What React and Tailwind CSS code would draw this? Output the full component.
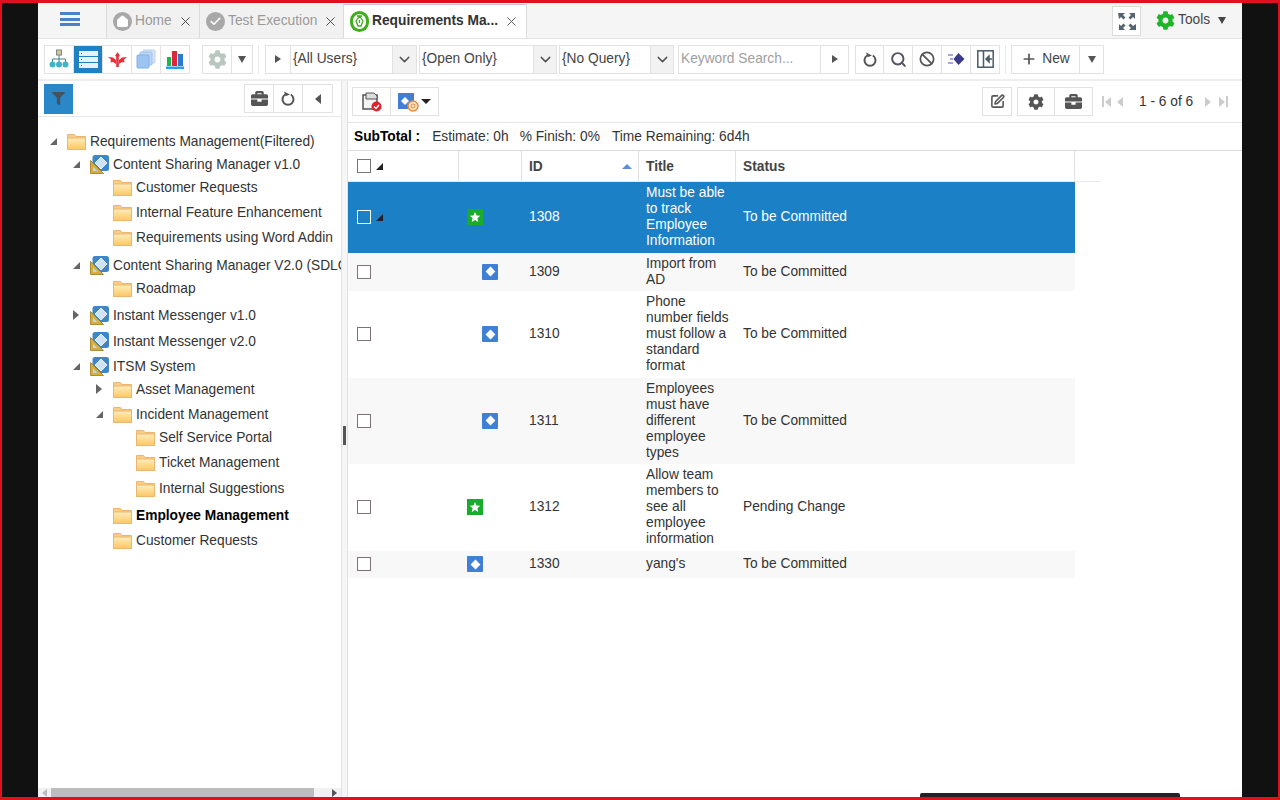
import { Check, ChevronDown, Search, Ban, Plus, SquarePen, Home, X } from 'lucide-react'
import { FaBriefcase, FaCog, FaFilter } from 'react-icons/fa'

const treeRows = [
  { label: 'Requirements Management(Filtered)', indent: 'pl-[8px]', gap: 'mt-0', arrow: 'open', icon: 'folder' },
  { label: 'Content Sharing Manager v1.0', indent: 'pl-[31px]', gap: 'mt-px', arrow: 'open', icon: 'project' },
  { label: 'Customer Requests', indent: 'pl-[54px]', gap: 'mt-px', icon: 'folder' },
  { label: 'Internal Feature Enhancement', indent: 'pl-[54px]', gap: 'mt-[3px]', icon: 'folder' },
  { label: 'Requirements using Word Addin', indent: 'pl-[54px]', gap: 'mt-[3px]', icon: 'folder' },
  { label: 'Content Sharing Manager V2.0 (SDLC)', indent: 'pl-[31px]', gap: 'mt-[6px]', arrow: 'open', icon: 'project' },
  { label: 'Roadmap', indent: 'pl-[54px]', gap: 'mt-px', icon: 'folder' },
  { label: 'Instant Messenger v1.0', indent: 'pl-[31px]', gap: 'mt-[5px]', arrow: 'closed', icon: 'project' },
  { label: 'Instant Messenger v2.0', indent: 'pl-[31px]', gap: 'mt-[4px]', icon: 'project' },
  { label: 'ITSM System', indent: 'pl-[31px]', gap: 'mt-[3px]', arrow: 'open', icon: 'project' },
  { label: 'Asset Management', indent: 'pl-[54px]', gap: 'mt-px', arrow: 'closed', icon: 'folder' },
  { label: 'Incident Management', indent: 'pl-[54px]', gap: 'mt-[3px]', arrow: 'open', icon: 'folder' },
  { label: 'Self Service Portal', indent: 'pl-[77px]', gap: 'mt-px', icon: 'folder' },
  { label: 'Ticket Management', indent: 'pl-[77px]', gap: 'mt-[3px]', icon: 'folder' },
  { label: 'Internal Suggestions', indent: 'pl-[77px]', gap: 'mt-[4px]', icon: 'folder' },
  { label: 'Employee Management', indent: 'pl-[54px]', gap: 'mt-[5px]', icon: 'folder', bold: true },
  { label: 'Customer Requests', indent: 'pl-[54px]', gap: 'mt-[3px]', icon: 'folder' },
]

const gridRows = [
  { id: 1308, title: 'Must be able to track Employee Information', status: 'To be Committed', type: 'star', height: 'h-[71px]', selected: true, arrow: true },
  { id: 1309, title: 'Import from AD', status: 'To be Committed', type: 'req', height: 'h-[38px]', shaded: true, indented: true },
  { id: 1310, title: 'Phone number fields must follow a standard format', status: 'To be Committed', type: 'req', height: 'h-[87px]', indented: true },
  { id: 1311, title: 'Employees must have different employee types', status: 'To be Committed', type: 'req', height: 'h-[86px]', shaded: true, indented: true },
  { id: 1312, title: 'Allow team members to see all employee information', status: 'Pending Change', type: 'star', height: 'h-[87px]' },
  { id: 1330, title: "yang's", status: 'To be Committed', type: 'req', height: 'h-[27px]', shaded: true },
]

function FolderIcon() {
  return (
    <svg width="19" height="17" viewBox="0 0 19 17" className="shrink-0">
      <defs>
        <linearGradient id="folderFill" x1="0" y1="0" x2="0" y2="1">
          <stop offset="0" stopColor="#ffedc0" />
          <stop offset="0.35" stopColor="#fde09a" />
          <stop offset="1" stopColor="#fbc766" />
        </linearGradient>
      </defs>
      <path d="M.5 4V1.500h7l1.500 2h9.500V6H.5z" fill="#f8cd85" stroke="#ecb670" />
      <rect x=".5" y="5" width="18" height="11.500" fill="url(#folderFill)" stroke="#ecb670" />
    </svg>
  )
}

function ProjectIcon() {
  return (
    <svg width="19" height="19" viewBox="0 0 19 19" className="shrink-0">
      <rect x="2.500" y="0" width="16.500" height="16" rx="2.500" fill="#3f86c8" />
      <path d="M11 2l6 6-6 6-6-6z" fill="#cfe3f5" stroke="#fff" strokeWidth=".8" />
      <path d="M.5 5.500v13h13z" fill="#d6ae3c" stroke="#9a7a20" strokeWidth=".8" />
      <path d="M3 11.500V16h4.500z" fill="#bcd6ee" />
    </svg>
  )
}

function TreeArrow({ kind }) {
  return (
    <span className="flex h-full w-[14px] shrink-0 items-center justify-center">
      {kind === 'open' && <span className="h-0 w-0 border-b-[7px] border-l-[7px] border-b-[#666] border-l-transparent" />}
      {kind === 'closed' && <span className="h-0 w-0 border-y-[5px] border-l-[6px] border-y-transparent border-l-[#666]" />}
    </span>
  )
}

function Tri({ dir = 'down', color = 'border-t-[#555]' }) {
  if (dir === 'right') return <span className="block h-0 w-0 border-y-[4px] border-l-[6px] border-y-transparent border-l-[#555]" />
  if (dir === 'left') return <span className="block h-0 w-0 border-y-[5px] border-r-[6px] border-y-transparent border-r-[#555]" />
  return <span className={`block h-0 w-0 border-x-[4px] border-t-[7px] border-x-transparent ${color}`} />
}

function ToolGroup({ children, className = '' }) {
  return <div className={`flex h-[29px] shrink-0 divide-x divide-[#e2e2e2] border border-[#e2e2e2] bg-white ${className}`}>{children}</div>
}

function Tool({ children, className = 'w-[29px]' }) {
  return <div className={`flex h-full shrink-0 items-center justify-center ${className}`}>{children}</div>
}

function Refresh() {
  return (
    <svg width="14" height="15" viewBox="0 0 14 15" fill="none">
      <path d="M4.200 3.500a5.500 5.500 0 1 0 5.600 0" stroke="#555" strokeWidth="2" />
      <path d="M3 .5l1.500 4.800L9 3.600z" fill="#555" />
    </svg>
  )
}

function Picker({ label, width, inner }) {
  return (
    <div className={`flex h-[29px] shrink-0 border border-[#e2e2e2] bg-white ${width}`}>
      <div className={`flex items-center pl-[2px] pt-[1px] text-[#444] ${inner}`}>{label}</div>
      <div className="flex flex-1 items-center justify-center border-l border-[#e2e2e2] bg-[#f2f2f2]">
        <ChevronDown size={17} strokeWidth={2} className="text-[#555]" />
      </div>
    </div>
  )
}

function Tab({ icon, label, width, active }) {
  return (
    <div className={`flex h-[34px] shrink-0 items-center border-r border-[#dcdcdc] ${width} ${active ? 'border-t border-t-[#bcc4d8] bg-white font-bold text-[#333]' : 'bg-[#f1f1f1] text-[#9a9a9a]'}`}>
      <div className="ml-[6px] mr-[3px] shrink-0">{icon}</div>
      <span className="whitespace-nowrap">{label}</span>
      <X size={15} strokeWidth={1.5} className={`ml-[6px] shrink-0 ${active ? 'text-[#555]' : 'text-[#444]'}`} />
    </div>
  )
}

function ReqIcon() {
  return (
    <span className="flex h-[16px] w-[16px] items-center justify-center rounded-[1px] bg-[#3f80d6]">
      <span className="h-[7px] w-[7px] rotate-45 bg-white" />
    </span>
  )
}

function StarIcon() {
  return (
    <span className="flex h-[16px] w-[16px] items-center justify-center bg-[#19ac2a]">
      <svg width="12" height="12" viewBox="0 0 24 24" fill="#fff">
        <path d="M12 2l3 7 7.500.6-5.700 4.900 1.800 7.400L12 18l-6.600 3.900 1.800-7.400L1.500 9.600 9 9z" />
      </svg>
    </span>
  )
}

function GridRow({ row }) {
  const bg = row.selected ? 'bg-[#1b80c6] text-white' : row.shaded ? 'bg-[#f8f8f8] text-[#333]' : 'bg-white text-[#333]'
  return (
    <div className={`flex items-center pb-[1px] leading-[16px] ${row.height} ${bg}`}>
      <div className="flex w-[110px] shrink-0 items-center pl-[9px]">
        <span className={`h-[14px] w-[14px] border ${row.selected ? 'border-white bg-[#1b80c6]' : 'border-[#7d7373] bg-white'}`} />
        {row.arrow && <span className="ml-[5px] h-0 w-0 border-b-[7px] border-l-[7px] border-b-[#222] border-l-transparent" />}
      </div>
      <div className={`flex w-[63px] shrink-0 ${row.indented ? 'pl-[24px]' : 'pl-[9px]'}`}>
        {row.type === 'star' ? <StarIcon /> : <ReqIcon />}
      </div>
      <div className="w-[117px] shrink-0 pl-[8px]">{row.id}</div>
      <div className="w-[97px] shrink-0 pl-[8px] pr-[4px]">{row.title}</div>
      <div className="pl-[8px]">{row.status}</div>
    </div>
  )
}

export default function App() {
  return (
    <div className="relative flex h-[800px] w-[1280px] flex-col overflow-hidden border-x-2 border-y-[3px] border-[#e0101f] bg-[#111] px-[36px] font-['Liberation_Sans',Arial,sans-serif] text-[13.75px]">
      <div className="flex min-h-0 flex-1 flex-col bg-white">
        {/* tab strip */}
        <div className="flex h-[36px] shrink-0 items-end border-b border-[#e4e4e4] bg-[#f5f5f5]">
          <div className="flex h-[34px] w-[69px] shrink-0 items-center justify-center border-r border-[#dcdcdc]">
            <div className="flex flex-col gap-[2.5px] pb-[4px] pr-[5px]">
              <span className="h-[3px] w-[20px] bg-[#4a80cc]" />
              <span className="h-[3px] w-[20px] bg-[#4a80cc]" />
              <span className="h-[3px] w-[20px] bg-[#4a80cc]" />
            </div>
          </div>
          <Tab
            width="w-[93px]"
            label="Home"
            icon={<span className="flex h-[19px] w-[19px] items-center justify-center rounded-full bg-[#a8a8a8]"><Home size={13} fill="#fff" className="text-white" /></span>}
          />
          <Tab
            width="w-[144px]"
            label="Test Execution"
            icon={<span className="flex h-[19px] w-[19px] items-center justify-center rounded-full bg-[#a8a8a8]"><Check size={13} strokeWidth={3} className="text-white" /></span>}
          />
          <Tab
            active
            width="w-[183px]"
            label="Requirements Ma..."
            icon={
              <span className="flex h-[21px] w-[19px] items-center justify-center rounded-full bg-[#3fae1e]">
                <span className="flex h-[15px] w-[13px] items-center justify-center rounded-full bg-white">
                  <svg width="9" height="13" viewBox="0 0 9 13" fill="none" stroke="#3fae1e" strokeWidth="1.300">
                    <path d="M2 1h5M4.500 1L8 6l-2 5H3L1 6zM4.500 5v3" />
                  </svg>
                </span>
              </span>
            }
          />
          <div className="flex-1" />
          <div className="mb-[2px] flex h-[30px] w-[29px] shrink-0 items-center justify-center border border-[#dcdcdc] bg-white">
            <svg width="18" height="17" viewBox="0 0 18 17" fill="#56646f">
              <path d="M0 0h7L5 2l2.500 2.500-2 2L3 4 1 6zM18 0h-7l2 2-2.500 2.500 2 2L15 4l2 2V0zM0 17h7l-2-2 2.500-2.500-2-2L3 13l-2-2v6zM18 17h-7l2-2-2.500-2.500 2-2L15 13l3-2z" />
            </svg>
          </div>
          <div className="mb-[3px] ml-[15px] mr-[14px] flex h-[30px] w-[72px] shrink-0 items-center">
            <FaCog size={19} className="text-[#1fb52a]" />
            <span className="ml-[3px] text-[#444]">Tools</span>
            <span className="ml-[8px]"><Tri color="border-t-[#444]" /></span>
          </div>
        </div>

        {/* main toolbar */}
        <div className="flex h-[42px] shrink-0 items-center border-b-2 border-[#eeeeee] pl-[6px]">
          <ToolGroup>
            <Tool>
              <svg width="20" height="20" viewBox="0 0 20 20" fill="none">
                <rect x="7.500" y="1" width="5" height="5" fill="#d8c49a" stroke="#7a8a80" />
                <path d="M10 6v4M3.500 13v-3h13v3M10 10v3" stroke="#4a7f8c" />
                <circle cx="3.500" cy="15.500" r="3" fill="#3fb5c8" />
                <circle cx="10" cy="15.500" r="3" fill="#3fb5c8" />
                <circle cx="16.500" cy="15.500" r="3" fill="#3fb5c8" />
              </svg>
            </Tool>
            <Tool className="w-[29px] bg-[#1f80c4]">
              <svg width="19" height="19" viewBox="0 0 19 19">
                <rect y="1" width="19" height="5" fill="#e8f1f8" />
                <rect y="7" width="19" height="5" fill="#e8f1f8" />
                <rect y="13" width="19" height="5" fill="#e8f1f8" />
                <path d="M2 3.500h1M2 9.500h1M2 15.500h1" stroke="#1f80c4" />
              </svg>
            </Tool>
            <Tool>
              <svg width="19" height="17" viewBox="0 0 19 17">
                <path d="M9.500 1l2.500 4-1.200.5V16H8.200V5.500L7 5zM0 6l5 .5 3 2.500v4L5 11l-2.500.5L3 8.500zM19 6l-5 .5L11 9v4l3-2 2.500.5L16 8.500z" fill="#e8303a" />
              </svg>
            </Tool>
            <Tool>
              <svg width="20" height="20" viewBox="0 0 20 20">
                <rect x="7" y="1" width="12" height="13" rx="1" fill="#d6e6f8" stroke="#b4d0ee" />
                <rect x="4" y="3" width="12" height="13" rx="1" fill="#bcd6f4" stroke="#9cc0ea" />
                <rect x="1" y="6" width="12" height="13" rx="1" fill="#9cc4f0" stroke="#84b0e4" />
              </svg>
            </Tool>
            <Tool className="w-[28px]">
              <svg width="18" height="19" viewBox="0 0 18 19">
                <rect x="1" y="7" width="4" height="9" fill="#19b84a" />
                <rect x="6" y="1" width="5" height="15" fill="#e0263c" />
                <rect x="12" y="4" width="5" height="12" fill="#2a7ad0" />
                <rect y="16.500" width="18" height="2.500" fill="#2a9ee6" />
              </svg>
            </Tool>
          </ToolGroup>
          <ToolGroup className="ml-[12px]">
            <Tool><FaCog size={19} className="text-[#b8c8c0]" /></Tool>
            <Tool className="w-[20px]"><Tri /></Tool>
          </ToolGroup>
          <div className="ml-[5px] h-[29px] w-px bg-[#e8e8e8]" />
          <div className="ml-[6px] flex h-[29px] w-[25px] shrink-0 items-center justify-center border border-r-0 border-[#e2e2e2]"><Tri dir="right" /></div>
          <Picker label="{All Users}" width="w-[127px]" inner="w-[101px]" />
          <div className="w-[2px] shrink-0" />
          <Picker label="{Open Only}" width="w-[138px]" inner="w-[113px]" />
          <div className="w-[2px] shrink-0" />
          <Picker label="{No Query}" width="w-[115px]" inner="w-[90px]" />
          <div className="ml-[4px] flex h-[29px] w-[171px] shrink-0 border border-[#e2e2e2]">
            <div className="flex w-[141px] items-center pl-[2px] text-[#a0a0a0]">Keyword Search...</div>
            <div className="flex flex-1 items-center justify-center border-l border-[#e2e2e2]"><Tri dir="right" /></div>
          </div>
          <ToolGroup className="ml-[6px]">
            <Tool className="w-[28px]"><Refresh /></Tool>
            <Tool><Search size={17} strokeWidth={2.8} className="text-[#556]" /></Tool>
            <Tool><Ban size={16} strokeWidth={2.6} className="text-[#555]" /></Tool>
            <Tool>
              <svg width="17" height="12" viewBox="0 0 17 12">
                <path d="M10.500 0l6 6-6 6-5-6z" fill="#3a3a8c" />
                <path d="M0 2h5M2 6h3M0 10h5" stroke="#8a8ac8" strokeWidth="1.500" />
              </svg>
            </Tool>
            <Tool className="w-[28px]">
              <svg width="17" height="18" viewBox="0 0 17 18" fill="none" stroke="#4a5a68" strokeWidth="1.500">
                <rect x=".8" y=".8" width="15.400" height="16.400" />
                <path d="M6.500 1v16M15 9H9.500" />
                <path d="M9 9l3-3v6z" fill="#4a5a68" />
              </svg>
            </Tool>
          </ToolGroup>
          <div className="ml-[5px] h-[29px] w-px bg-[#e8e8e8]" />
          <ToolGroup className="ml-[5px]">
            <Tool className="w-[68px]">
              <Plus size={16} strokeWidth={2.6} className="text-[#555]" />
              <span className="ml-[5px] pt-[1px] text-[#444]">New</span>
            </Tool>
            <Tool className="w-[23px]"><Tri /></Tool>
          </ToolGroup>
        </div>

        {/* body */}
        <div className="flex min-h-0 flex-1">
          {/* tree panel */}
          <div className="flex w-[303px] shrink-0 flex-col overflow-hidden">
            <div className="flex h-[36px] shrink-0 items-center border-b border-[#e8e8e8] pl-[6px] pr-[8px]">
              <div className="flex h-[30px] w-[29px] items-center justify-center bg-[#2b88c8]">
                <FaFilter size={13} className="text-[#44525e]" />
              </div>
              <div className="flex-1" />
              <ToolGroup>
                <Tool><FaBriefcase size={17} className="text-[#555]" /></Tool>
                <Tool><Refresh /></Tool>
                <Tool><Tri dir="left" /></Tool>
              </ToolGroup>
            </div>
            <div className="min-h-0 flex-1 pt-[13px]">
              {treeRows.map((item, i) => (
                <div key={i} className={`flex h-[22px] w-[303px] items-center overflow-hidden whitespace-nowrap text-[#333] ${item.indent} ${item.gap} ${item.bold ? 'font-bold text-black' : ''}`}>
                  <TreeArrow kind={item.arrow} />
                  <span className="ml-[7px] mr-[4px] flex w-[19px] shrink-0 justify-center">
                    {item.icon === 'folder' ? <FolderIcon /> : <ProjectIcon />}
                  </span>
                  <span className="pt-[2px]">{item.label}</span>
                </div>
              ))}
            </div>
            <div className="flex h-[9px] shrink-0 items-center bg-[#f1f1f1]">
              <span className="ml-[4px] h-0 w-0 border-y-[4px] border-r-[5px] border-y-transparent border-r-[#bbb]" />
              <div className="ml-[4px] h-[9px] w-[263px] bg-[#bdbdbd]" />
              <div className="flex-1" />
              <span className="mr-[4px] h-0 w-0 border-y-[4px] border-l-[5px] border-y-transparent border-l-[#555]" />
            </div>
          </div>

          {/* splitter */}
          <div className="flex w-[7px] shrink-0 items-center border-x border-[#e2e2e2] bg-[#f6f6f6]">
            <div className="mb-[8px] ml-[1px] h-[19px] w-[3px] bg-[#555]" />
          </div>

          {/* grid panel */}
          <div className="flex min-w-0 flex-1 flex-col">
            <div className="flex h-[42px] shrink-0 items-center border-b border-[#e4e4e4] pl-[4px] pr-[6px]">
              <ToolGroup>
                <Tool className="w-[38px]">
                  <svg width="20" height="20" viewBox="0 0 20 20">
                    <rect x="1" y="3" width="14" height="14" fill="#f4f4f4" stroke="#555" strokeWidth="1.500" />
                    <path d="M4 1h8l3 3v3H4z" fill="#ddd" stroke="#555" />
                    <circle cx="14.500" cy="14.500" r="5" fill="#e0202c" />
                    <path d="M12 14.500l2 2 3-3.500" fill="none" stroke="#fff" strokeWidth="1.500" />
                  </svg>
                </Tool>
                <Tool className="w-[47px]">
                  <svg width="22" height="20" viewBox="0 0 22 20">
                    <rect x="0" y="1" width="16" height="16" fill="#3f80d6" />
                    <path d="M7 5l4 4-4 4-4-4z" fill="#fff" />
                    <circle cx="15" cy="14" r="5" fill="#f6e2c8" stroke="#e8893a" strokeWidth="1.500" />
                    <circle cx="15" cy="14" r="2" fill="none" stroke="#e8893a" />
                  </svg>
                  <span className="ml-[1px] h-0 w-0 border-x-[5px] border-t-[5px] border-x-transparent border-t-[#222]" />
                </Tool>
              </ToolGroup>
              <div className="flex-1" />
              <ToolGroup className="w-[30px]">
                <Tool className="w-full"><SquarePen size={15} strokeWidth={2.5} className="text-[#555]" /></Tool>
              </ToolGroup>
              <ToolGroup className="ml-[5px]">
                <Tool className="w-[37px]"><FaCog size={16} className="text-[#555]" /></Tool>
                <Tool className="w-[37px]"><FaBriefcase size={17} className="text-[#555]" /></Tool>
              </ToolGroup>
              <div className="ml-[9px] flex w-[134px] items-center text-[#333]">
                <span className="h-[11px] w-[2px] bg-[#ccc]" />
                <span className="ml-[1px] h-0 w-0 border-y-[5px] border-r-[6px] border-y-transparent border-r-[#ccc]" />
                <span className="ml-[6px] h-0 w-0 border-y-[5px] border-r-[6px] border-y-transparent border-r-[#ccc]" />
                <span className="ml-[16px] whitespace-nowrap pt-[1px]">1 - 6 of 6</span>
                <span className="ml-[12px] h-0 w-0 border-y-[5px] border-l-[6px] border-y-transparent border-l-[#ccc]" />
                <span className="ml-[8px] h-0 w-0 border-y-[5px] border-l-[6px] border-y-transparent border-l-[#ccc]" />
                <span className="ml-[1px] h-[11px] w-[2px] bg-[#ccc]" />
              </div>
            </div>
            <div className="flex h-[28px] shrink-0 items-center gap-[12px] border-b border-[#dcdcdc] pl-[6px] pt-[2px] text-[#333]">
              <span className="font-bold text-black">SubTotal :</span>
              <span>Estimate: 0h</span>
              <span className="-ml-[1px]">% Finish: 0%</span>
              <span>Time Remaining: 6d4h</span>
            </div>
            <div className="flex h-[31px] w-[752px] shrink-0 items-center border-b border-[#e8e8e8] font-bold text-[#444]">
              <div className="flex h-full w-[111px] shrink-0 items-center border-r border-[#e2e2e2] pl-[9px]">
                <span className="h-[14px] w-[14px] border border-[#777] bg-white" />
                <span className="ml-[5px] h-0 w-0 border-b-[7px] border-l-[7px] border-b-[#222] border-l-transparent" />
              </div>
              <div className="h-full w-[63px] shrink-0 border-r border-[#e2e2e2]" />
              <div className="flex h-full w-[117px] shrink-0 items-center justify-between border-r border-[#e2e2e2] pl-[7px] pr-[6px]">
                <span className="pt-[2px]">ID</span>
                <span className="h-0 w-0 border-x-[5px] border-b-[5px] border-x-transparent border-b-[#5b8fd8]" />
              </div>
              <div className="flex h-full w-[97px] shrink-0 items-center border-r border-[#e2e2e2] pl-[7px] pt-[2px]">Title</div>
              <div className="flex h-full w-[339px] shrink-0 items-center border-r border-[#e2e2e2] pl-[7px] pt-[2px]">Status</div>
            </div>
            <div className="w-[727px]">
              {gridRows.map((row) => <GridRow key={row.id} row={row} />)}
            </div>
          </div>
        </div>
      </div>
      <div className="absolute bottom-0 left-[918px] h-[4px] w-[260px] rounded-t-[2px] bg-[#222]" />
    </div>
  )
}
